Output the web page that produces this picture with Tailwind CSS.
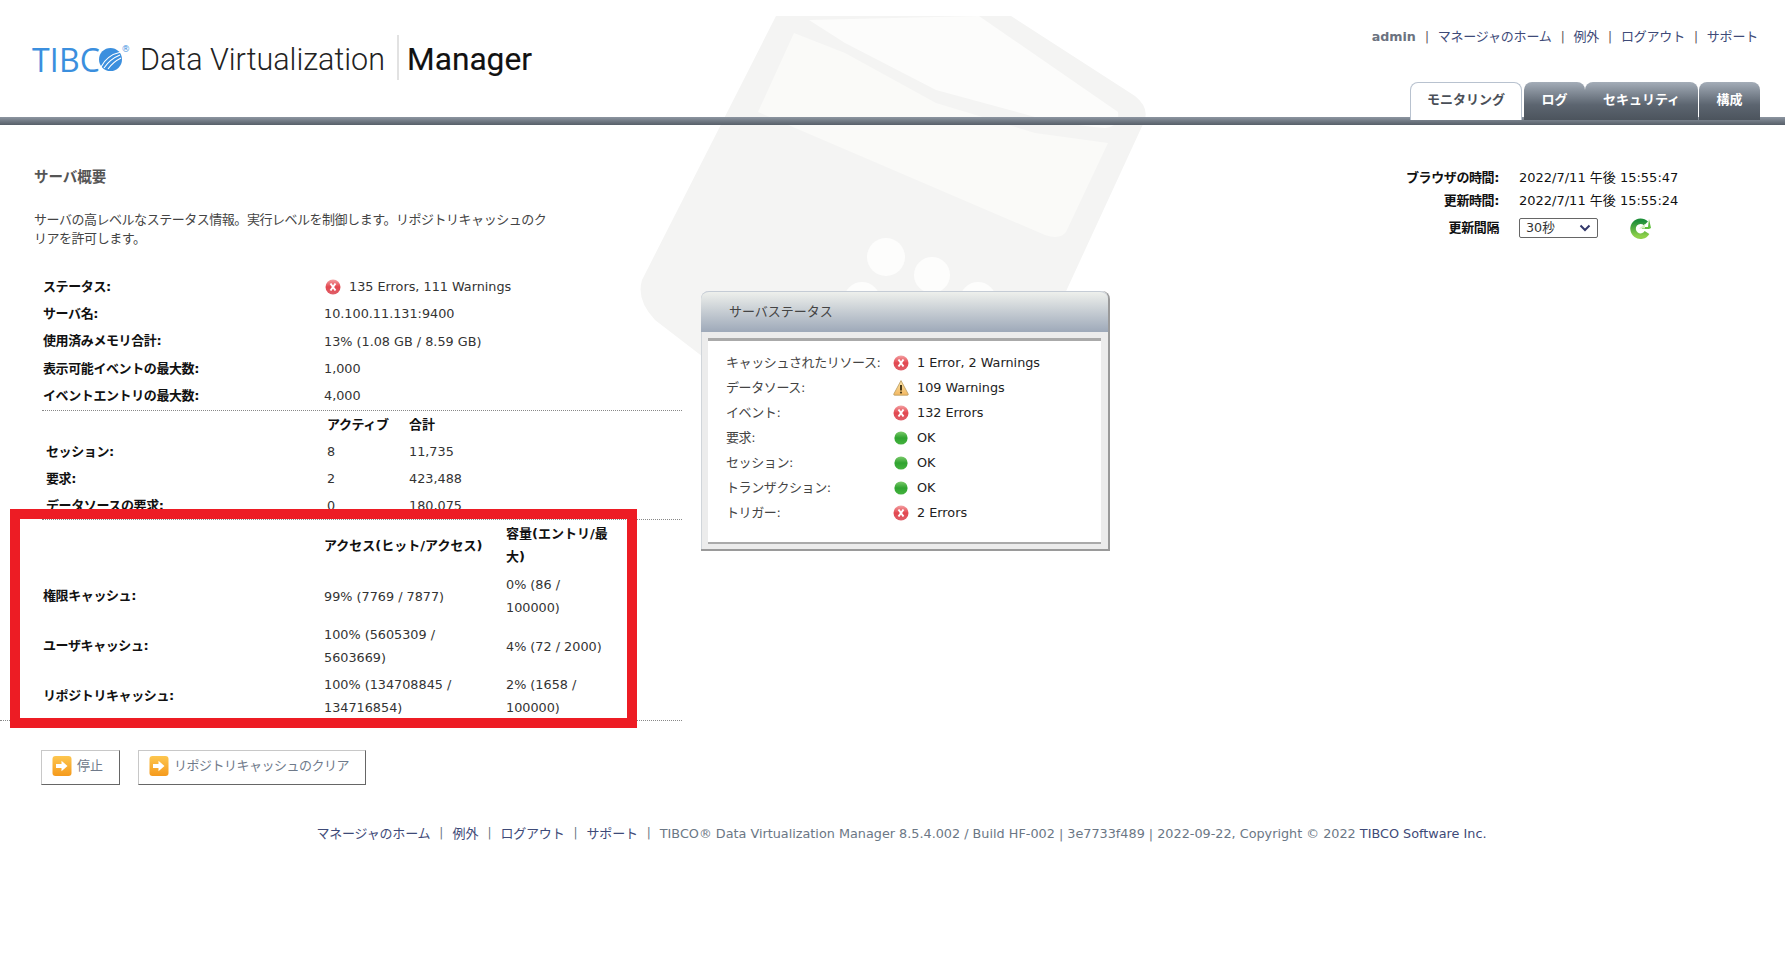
<!DOCTYPE html>
<html lang="ja">
<head>
  <meta charset="UTF-8">
  <title>TIBCO Data Virtualization Manager</title>
  <script src="https://cdn.jsdelivr.net/npm/@tailwindcss/browser@4"></script>
</head>
<body class="relative bg-white min-h-[980px] overflow-hidden text-[#111] font-['DejaVu_Sans','Noto_Sans_CJK_JP',sans-serif] text-[12.8px]">

  <!-- hidden icon defs -->
  <svg class="absolute w-0 h-0">
    <defs>
      <linearGradient id="redg" x1="0" y1="0" x2="0" y2="1"><stop offset="0" stop-color="#f4a0a2"/><stop offset="0.5" stop-color="#e2474f"/><stop offset="1" stop-color="#e0606a"/></linearGradient>
      <linearGradient id="greeng" x1="0" y1="0" x2="0" y2="1"><stop offset="0" stop-color="#7ccb6c"/><stop offset="0.5" stop-color="#2fa32f"/><stop offset="1" stop-color="#45b33f"/></linearGradient>
      <linearGradient id="warng" x1="0" y1="0" x2="0" y2="1"><stop offset="0" stop-color="#fbe3a6"/><stop offset="1" stop-color="#f3b862"/></linearGradient>
      <linearGradient id="orangeg" x1="0" y1="0" x2="0" y2="1"><stop offset="0" stop-color="#fdc64f"/><stop offset="1" stop-color="#f59a1c"/></linearGradient>
      <linearGradient id="refg" x1="0" y1="0" x2="0" y2="1"><stop offset="0" stop-color="#1f8f3a"/><stop offset="1" stop-color="#8ed04a"/></linearGradient>
      <symbol id="err" viewBox="0 0 16 16"><circle cx="8" cy="8" r="7.5" fill="url(#redg)"/><path d="M5.500 4.500 L10.500 11.500 M10.500 4.500 L5.500 11.500" stroke="#fff" stroke-width="2"/></symbol>
      <symbol id="warn" viewBox="0 0 16 16"><path d="M8 .6 L15.200 14 Q15.500 15.200 14.400 15.200 L1.600 15.200 Q.5 15.200 .8 14 Z" fill="url(#warng)" stroke="#b89a60" stroke-width=".8"/><path d="M8 5 V10.500" stroke="#4a3a1a" stroke-width="2"/><circle cx="8" cy="12.600" r="1.100" fill="#4a3a1a"/></symbol>
      <symbol id="ok" viewBox="0 0 16 16"><circle cx="8" cy="8" r="6.600" fill="url(#greeng)"/></symbol>
      <symbol id="go" viewBox="0 0 20 20"><rect x=".5" y="0" width="19" height="20" rx="3" fill="url(#orangeg)"/><path d="M4 8 H9.500 V4.800 L15.500 10 L9.500 15.200 V12 H4 Z" fill="#fff"/></symbol>
    </defs>
  </svg>

  <!-- faint watermark behind the page -->
  <svg class="absolute left-0 top-0 pointer-events-none" width="1785" height="500" viewBox="0 0 1785 500">
    <path d="M776 16 L1011 16 L1135 96 Q1150 108 1144 122 L1062 300 L1040 400 L720 370 L655 320 Q636 300 642 280 Z" fill="#f4f4f3"/>
    <path d="M809 20 L979 16 L1118 112 Q1120 126 1105 128 Q1060 124 1035 117 L936 90 L845 43 Z" fill="#fcfcfb"/>
    <path d="M794 33 L845 53 L936 103 L1035 133 L1108 143 L1066 232 Q1060 240 1045 235 L758 112 Z" fill="#fafaf8"/>
    <circle cx="886" cy="257" r="19" fill="#fdfdfc"/>
    <circle cx="932" cy="275" r="18" fill="#fdfdfc"/>
    <circle cx="862" cy="300" r="18" fill="#fdfdfc"/>
    <circle cx="978" cy="300" r="18" fill="#fdfdfc"/>
  </svg>

  <header class="relative">
    <div class="flex justify-between items-start h-[117px]">
      <div class="flex items-center pl-[32px] pt-[37px]">
        <div class="flex items-center w-[108px] h-[45px]">
          <span class="font-['Open_Sans',sans-serif] text-[32px] leading-none text-[#3b8fde] tracking-[0.2px]">TIBC</span>
          <svg width="23" height="25" viewBox="0 0 23 25" class="-ml-[1px] shrink-0">
            <circle cx="11.500" cy="12.500" r="11.500" fill="#3b8fde"/>
            <path d="M2 20 Q8 8 22 5 M5 21 Q11 12 21 8 M9 22 Q14 15 22 11" stroke="#fff" stroke-width="1.100" fill="none"/>
          </svg>
          <span class="self-start mt-[8px] -ml-[1px] text-[9px] leading-none text-[#3b8fde]">®</span>
        </div>
        <span class="font-['Roboto',sans-serif] font-light text-[30.500px] leading-[45px] text-[#222] text-nowrap">Data Virtualization</span>
        <span class="ml-[12px] w-[2px] h-[45px] -mt-[4px] bg-[#e2e2e2]"></span>
        <span class="ml-[8px] font-['Roboto',sans-serif] text-[31.700px] leading-[45px] text-[#111] text-nowrap [-webkit-text-stroke:0.15px_#111]">Manager</span>
      </div>
      <div class="flex flex-col items-end pr-[25px] pt-[28px]">
        <nav class="flex items-center h-[18px] text-[13px] text-[#3e4a78] pr-[2px] tracking-[-0.2px]">
          <span class="font-bold text-[12.700px] text-[#6b7280] tracking-normal">admin</span>
          <span class="mx-[9px] text-[#555] text-[12px]">|</span>
          <a>マネージャのホーム</a>
          <span class="mx-[9px] text-[#555] text-[12px]">|</span>
          <a>例外</a>
          <span class="mx-[9px] text-[#555] text-[12px]">|</span>
          <a>ログアウト</a>
          <span class="mx-[9px] text-[#555] text-[12px]">|</span>
          <a>サポート</a>
        </nav>
        <div class="relative z-10 flex items-stretch h-[38px] mt-[36px] -mb-[3px] text-[13px] font-bold text-white">
          <div class="w-[112px] flex items-center justify-center rounded-t-[8px] bg-white border border-b-0 border-[#b8c2cf] text-[#4a4f58] pb-[3px]">モニタリング</div>
          <div class="w-[61px] ml-[2px] flex items-center justify-center rounded-t-[8px] bg-gradient-to-b from-[#a4adb8] via-[#5c6570] via-60% to-[#4c545d] pb-[3px]">ログ</div>
          <div class="w-[113px] flex items-center justify-center rounded-t-[8px] bg-gradient-to-b from-[#a4adb8] via-[#5c6570] via-60% to-[#4c545d] pb-[3px]">セキュリティ</div>
          <div class="w-[61px] ml-[1px] flex items-center justify-center rounded-t-[8px] bg-gradient-to-b from-[#a4adb8] via-[#5c6570] via-60% to-[#4c545d] pb-[3px]">構成</div>
        </div>
      </div>
    </div>
    <div class="h-[8px] bg-gradient-to-b from-[#8d96a1] to-[#575f69]"></div>
  </header>

  <main class="relative flex items-start">
    <!-- left column -->
    <section class="w-[701px] shrink-0 pt-[42px]">
      <h1 class="pl-[34px] text-[14.500px] leading-[20px] font-bold text-[#555]">サーバ概要</h1>
      <p class="pl-[34px] mt-[23px] w-[590px] text-[13px] leading-[19px] text-[#444] tracking-[-0.47px]">サーバの高レベルなステータス情報。実行レベルを制御します。リポジトリキャッシュのク<br>リアを許可します。</p>

      <div class="mt-[25px] pl-[43px] grid grid-cols-[281px_1fr] auto-rows-[27.250px] items-center text-[#333]">
        <div class="font-bold text-[13px] text-[#111] tracking-[-0.4px]">ステータス:</div>
        <div class="flex items-center"><svg class="w-[16px] h-[16px] ml-[1px] mr-[8px]"><use href="#err"/></svg>135 Errors, 111 Warnings</div>
        <div class="font-bold text-[13px] text-[#111] tracking-[-0.4px]">サーバ名:</div><div>10.100.11.131:9400</div>
        <div class="font-bold text-[13px] text-[#111] tracking-[-0.4px]">使用済みメモリ合計:</div><div>13% (1.08 GB / 8.59 GB)</div>
        <div class="font-bold text-[13px] text-[#111] tracking-[-0.4px]">表示可能イベントの最大数:</div><div>1,000</div>
        <div class="font-bold text-[13px] text-[#111] tracking-[-0.4px]">イベントエントリの最大数:</div><div>4,000</div>
      </div>

      <div class="ml-[42px] mt-[1px] w-[640px] border-t border-dotted border-[#888]"></div>

      <div class="pl-[46px] grid grid-cols-[281px_82px_1fr] auto-rows-[27px] items-center text-[#333]">
        <div class="h-[24px]"></div>
        <div class="h-[24px] font-bold text-[13px] leading-[24px] text-[#111] tracking-[-0.4px]">アクティブ</div>
        <div class="h-[24px] font-bold text-[13px] leading-[24px] text-[#111]">合計</div>
        <div class="font-bold text-[13px] text-[#111] tracking-[-0.4px]">セッション:</div><div>8</div><div>11,735</div>
        <div class="font-bold text-[13px] text-[#111] tracking-[-0.4px]">要求:</div><div>2</div><div>423,488</div>
        <div class="font-bold text-[13px] text-[#111] tracking-[-0.4px]">データソースの要求:</div><div>0</div><div>180,075</div>
      </div>

      <div class="ml-[42px] w-[640px] border-t border-dotted border-[#888]"></div>

      <div class="pl-[43px] grid grid-cols-[281px_182px_125px] auto-rows-[50px] items-center leading-[23px] text-[#333]">
        <div></div>
        <div class="font-bold text-[13px] text-[#111]">アクセス(ヒット/アクセス)</div>
        <div class="font-bold text-[13px] text-[#111]">容量(エントリ/最<br>大)</div>
        <div class="font-bold text-[13px] text-[#111] tracking-[-0.4px]">権限キャッシュ:</div>
        <div class="pt-[2px]">99% (7769 / 7877)</div>
        <div class="pt-[2px]">0% (86 /<br>100000)</div>
        <div class="font-bold text-[13px] text-[#111] tracking-[-0.4px]">ユーザキャッシュ:</div>
        <div class="pt-[2px]">100% (5605309 /<br>5603669)</div>
        <div class="pt-[2px]">4% (72 / 2000)</div>
        <div class="font-bold text-[13px] text-[#111] tracking-[-0.4px]">リポジトリキャッシュ:</div>
        <div class="pt-[2px]">100% (134708845 /<br>134716854)</div>
        <div class="pt-[2px]">2% (1658 /<br>100000)</div>
      </div>

      <div class="w-[682px] border-t border-dotted border-[#888]"></div>

      <div class="flex mt-[29px] pl-[41px] gap-[18px] text-[13px] text-[#6f7a8a]">
        <button class="flex items-center h-[35px] w-[79px] pl-[10px] pb-[3px] bg-white border border-[#c8c8c8] border-r-[#666] border-b-[#666]">
          <svg class="w-[20px] h-[20px] mr-[5px]"><use href="#go"/></svg><span class="-mt-[1px]">停止</span>
        </button>
        <button class="flex items-center h-[35px] w-[228px] pl-[10px] pb-[3px] bg-white border border-[#c8c8c8] border-r-[#666] border-b-[#666]">
          <svg class="w-[20px] h-[20px] mr-[5px]"><use href="#go"/></svg><span class="-mt-[1px] tracking-[-0.5px]">リポジトリキャッシュのクリア</span>
        </button>
      </div>
    </section>

    <!-- status box -->
    <section class="w-[409px] shrink-0 mt-[166px] h-[260px] flex flex-col rounded-t-[8px] bg-[#ececec] border-r-2 border-b-2 border-[#9a9a9a] shadow-[inset_1px_0_0_#d0d5da]">
      <h2 class="h-[41px] shrink-0 pl-[28px] flex items-center rounded-t-[8px] border-t border-[#c5ccd5] bg-gradient-to-b from-[#eef0ec] to-[#9ea9b9] text-[13px] text-[#444]">サーバステータス</h2>
      <div class="flex-1 mx-[7px] mt-[6px] mb-[5px] pt-[9px] bg-white border-t-[3px] border-b-[2px] border-t-[#aaaaaa] border-b-[#aaaaaa] pl-[18px] grid grid-cols-[167px_1fr] auto-rows-[25px] items-center content-start text-[#222]">
        <div class="text-[13px] text-[#444] tracking-[-0.4px]">キャッシュされたリソース:</div>
        <div class="flex items-center"><svg class="w-[16px] h-[16px] mr-[8px]"><use href="#err"/></svg>1 Error, 2 Warnings</div>
        <div class="text-[13px] text-[#444] tracking-[-0.4px]">データソース:</div>
        <div class="flex items-center"><svg class="w-[16px] h-[16px] mr-[8px]"><use href="#warn"/></svg>109 Warnings</div>
        <div class="text-[13px] text-[#444] tracking-[-0.4px]">イベント:</div>
        <div class="flex items-center"><svg class="w-[16px] h-[16px] mr-[8px]"><use href="#err"/></svg>132 Errors</div>
        <div class="text-[13px] text-[#444] tracking-[-0.4px]">要求:</div>
        <div class="flex items-center"><svg class="w-[16px] h-[16px] mr-[8px]"><use href="#ok"/></svg>OK</div>
        <div class="text-[13px] text-[#444] tracking-[-0.4px]">セッション:</div>
        <div class="flex items-center"><svg class="w-[16px] h-[16px] mr-[8px]"><use href="#ok"/></svg>OK</div>
        <div class="text-[13px] text-[#444] tracking-[-0.4px]">トランザクション:</div>
        <div class="flex items-center"><svg class="w-[16px] h-[16px] mr-[8px]"><use href="#ok"/></svg>OK</div>
        <div class="text-[13px] text-[#444] tracking-[-0.4px]">トリガー:</div>
        <div class="flex items-center"><svg class="w-[16px] h-[16px] mr-[8px]"><use href="#err"/></svg>2 Errors</div>
      </div>
    </section>

    <!-- refresh info -->
    <section class="flex-1 pt-[43px] grid grid-cols-[389px_1fr] gap-x-[20px] items-center auto-rows-[20px] gap-y-[3px] text-[13px]">
      <div class="text-right font-bold tracking-[-0.4px]">ブラウザの時間:</div><div>2022/7/11 午後 15:55:47</div>
      <div class="text-right font-bold tracking-[-0.4px]">更新時間:</div><div>2022/7/11 午後 15:55:24</div>
      <div class="mt-[8px] text-right font-bold tracking-[-0.4px]">更新間隔</div>
      <div class="mt-[8px] flex items-center">
        <div class="w-[79px] h-[20px] flex items-center justify-between pl-[6px] pr-[6px] border border-[#666] rounded-[2px] bg-white text-[12.700px] text-[#333]">
          30秒
          <svg width="12" height="8" viewBox="0 0 12 8"><path d="M1.500 1.500 L6 6 L10.500 1.500" fill="none" stroke="#33386b" stroke-width="2"/></svg>
        </div>
        <svg class="ml-[31px]" width="24" height="24" viewBox="0 0 24 24">
          <path d="M17 7.500 A7.500 7.500 0 1 0 18 16.500" fill="none" stroke="url(#refg)" stroke-width="5.500"/>
          <path d="M13 11 H19 L20 3 L22 12 L20 13 H13 Z" fill="#5fbe3c"/>
          <path d="M10 12.500 L16 8 V12.500 Z" fill="#d8f0c0"/>
        </svg>
      </div>
    </section>
  </main>

  <footer class="relative mt-[37px] pl-[18px] h-[22px] flex items-center justify-center text-[12.800px] text-[#6b7785]">
    <a class="text-[13px] text-[#3e4a78] tracking-[-0.2px]">マネージャのホーム</a>
    <span class="mx-[9px] text-[12px]">|</span>
    <a class="text-[13px] text-[#3e4a78]">例外</a>
    <span class="mx-[9px] text-[12px]">|</span>
    <a class="text-[13px] text-[#3e4a78] tracking-[-0.2px]">ログアウト</a>
    <span class="mx-[9px] text-[12px]">|</span>
    <a class="text-[13px] text-[#3e4a78] tracking-[-0.2px]">サポート</a>
    <span class="mx-[9px] text-[12px]">|</span>
    <span>TIBCO® Data Virtualization Manager 8.5.4.002 / Build HF-002 | 3e7733f489 | 2022-09-22, Copyright © 2022 <a class="text-[#3e4a78]">TIBCO Software Inc.</a></span>
  </footer>

  <!-- red annotation frame pasted on the screenshot -->
  <div class="absolute left-[10px] top-[509px] w-[627px] h-[219px] border-[10px] border-[#ed1c24]"></div>
</body>
</html>
